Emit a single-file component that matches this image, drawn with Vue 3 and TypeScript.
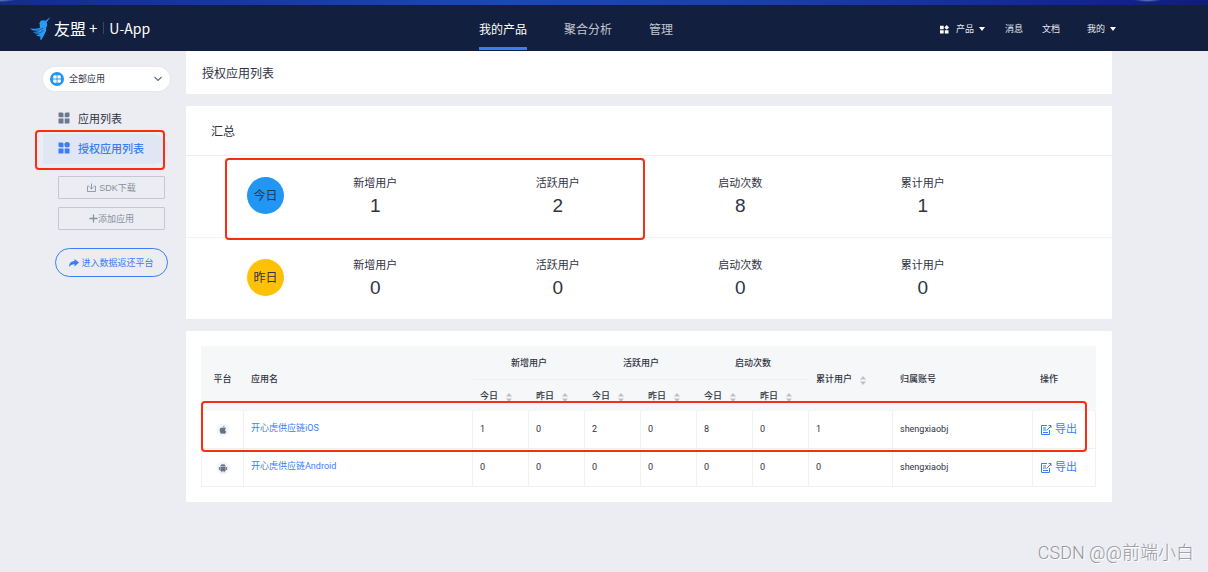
<script setup lang="ts">
import { ref } from 'vue'

interface Stat { label: string; value: number }
interface Summary { name: string; tone: string; stats: Stat[] }
interface AppRow { os: 'ios' | 'android'; name: string; values: number[]; total: number; account: string }

const tabs = ['我的产品', '聚合分析', '管理']
const scope = ref('全部应用')
const labels = ['新增用户', '活跃用户', '启动次数', '累计用户']
const groups = labels.slice(0, 3)

const toStats = (values: number[]): Stat[] => values.map((value, i) => ({ label: labels[i], value }))

const summaries: Summary[] = [
  { name: '今日', tone: 'blue', stats: toStats([1, 2, 8, 1]) },
  { name: '昨日', tone: 'amber', stats: toStats([0, 0, 0, 0]) },
]

const rows: AppRow[] = [
  { os: 'ios', name: '开心虎供应链iOS', values: [1, 0, 2, 0, 8, 0], total: 1, account: 'shengxiaobj' },
  { os: 'android', name: '开心虎供应链Android', values: [0, 0, 0, 0, 0, 0], total: 0, account: 'shengxiaobj' },
]
</script>

<template>
  <div class="page">
    <div class="strip"></div>
    <header class="topbar">
      <a class="brand" href="#">
        <svg class="bird" viewBox="0 0 66 76" aria-hidden="true">
          <path fill="#2b9af3" d="M65 1 52 19Q57 25 51 35Q53 45 45 58L35 75Q30 70 33 63Q24 64 18 58Q26 58 31 56Q18 57 9 49Q20 51 28 48Q10 48 0 37Q17 41 32 36Q29 32 31 27Q27 23 32 16Q40 9 49 14Z" />
          <path fill="none" stroke="#131f3e" stroke-width="1.6" d="M10 44Q27 46 42 37M17 53Q32 55 43 44" />
        </svg>
        <span class="brand-cn">友盟</span>
        <span class="plus">+</span>
        <span class="brand-app">U-App</span>
      </a>
      <nav class="tabs">
        <a v-for="(t, i) in tabs" :key="t" href="#" :class="{ on: i === 0 }">{{ t }}</a>
      </nav>
      <div class="tools">
        <button type="button" class="tool">
          <svg class="grid-icon" viewBox="0 0 9 9" aria-hidden="true">
            <path fill="#fff" d="M0 .8h3.700v3.400H0zM0 5.200h3.700v3.400H0zM4.800 5.200h3.700v3.400H4.800zM6.700 0 9 2.400 6.700 4.800 4.400 2.400z" />
          </svg>
          产品<i class="caret"></i>
        </button>
        <a href="#" class="tool news">消息</a>
        <a href="#" class="tool docs">文档</a>
        <button type="button" class="tool mine">我的<i class="caret"></i></button>
      </div>
    </header>

    <div class="body">
      <aside class="side">
        <label class="picker">
          <svg class="picker-icon" viewBox="0 0 14 14" aria-hidden="true">
            <circle cx="7" cy="7" r="7" fill="#2196f3" />
            <path fill="#fff" d="M4.200 3.200h2.400v3.400H3.200V4.200zM7.400 3.200h2.400l1 1v2.400H7.400zM3.200 7.400h3.400v3.400H4.200l-1-1zM7.400 7.400h3.400v2.400l-1 1H7.400z" />
          </svg>
          <select v-model="scope" aria-label="应用范围">
            <option>全部应用</option>
          </select>
          <svg class="chev" viewBox="0 0 8 6" aria-hidden="true">
            <path d="M.5 1 4 4.500 7.500 1" fill="none" stroke="#5f6b80" stroke-width="1.100" />
          </svg>
        </label>

        <nav class="menu">
          <a href="#" class="item">
            <svg viewBox="0 0 12 12" aria-hidden="true">
              <path fill="#6b788e" d="M1 .5h3.500l1 1V5.200h-4l-1-1V1zM7.700.5H11l.5.5v3.200l-1 1H6.700V1.500zM.5 6.500h5v5H1L.5 11zM6.700 6.500h4.800V11l-.5.5H6.700z" />
            </svg>
            应用列表
          </a>
          <a href="#" class="item active">
            <svg viewBox="0 0 12 12" aria-hidden="true">
              <path fill="#3a7df6" d="M.5.500h4l1 1v3.700h-4l-1-1zM.5 6.500h5v5h-5zM6.700 6.500h4.800v5H6.700z" />
              <circle cx="9.100" cy="2.800" r="2.700" fill="#3a7df6" />
            </svg>
            授权应用列表
          </a>
          <span class="mark mark-menu"></span>
        </nav>

        <div class="actions">
          <button type="button" class="box">
            <svg viewBox="0 0 10 10" aria-hidden="true">
              <path fill="none" stroke="#8790a0" d="M2.500 3.500h-2v6h9v-6h-2M5 .5v6M3 4.700l2 2 2-2" />
            </svg>
            SDK下载
          </button>
          <button type="button" class="box add">
            <svg viewBox="0 0 10 10" aria-hidden="true">
              <path fill="none" stroke="#8790a0" stroke-width="1.400" d="M5 .5v9M.5 5h9" />
            </svg>
            添加应用
          </button>
          <button type="button" class="pill">
            <svg viewBox="0 0 10 8" aria-hidden="true">
              <path fill="#3a7df6" d="M5.500 0 10 3.500 5.500 7.500V5.200Q2 4.800 0 8 0 2.200 5.500 2z" />
            </svg>
            进入数据返还平台
          </button>
        </div>
      </aside>

      <main class="content">
        <section class="card title"><h1>授权应用列表</h1></section>

        <section class="card">
          <h2>汇总</h2>
          <div v-for="(s, i) in summaries" :key="s.name" class="summary">
            <div class="day"><span class="disc" :class="s.tone">{{ s.name }}</span></div>
            <div v-for="st in s.stats" :key="st.label" class="stat">
              <span class="label">{{ st.label }}</span>
              <span class="num">{{ st.value }}</span>
            </div>
            <span v-if="i === 0" class="mark mark-day"></span>
          </div>
        </section>

        <section class="card list">
          <div class="table-wrap">
            <table>
              <colgroup>
                <col class="c-os" /><col />
                <col v-for="n in 6" :key="n" class="c-n" />
                <col class="c-total" /><col class="c-acc" /><col class="c-op" />
              </colgroup>
              <thead>
                <tr class="h1">
                  <th rowspan="2" class="mid">平台</th>
                  <th rowspan="2">应用名</th>
                  <th v-for="g in groups" :key="g" colspan="2" class="mid group">{{ g }}</th>
                  <th rowspan="2">
                    <button type="button" class="sort">累计用户
                      <svg viewBox="0 0 6 9" aria-hidden="true"><path fill="#bfbfc4" d="M3 0 6 3.500H0zM0 5.500h6L3 9z" /></svg>
                    </button>
                  </th>
                  <th rowspan="2">归属账号</th>
                  <th rowspan="2">操作</th>
                </tr>
                <tr class="h2">
                  <th v-for="n in 6" :key="n">
                    <button type="button" class="sort">{{ n % 2 ? '今日' : '昨日' }}
                      <svg viewBox="0 0 6 9" aria-hidden="true"><path fill="#bfbfc4" d="M3 0 6 3.500H0zM0 5.500h6L3 9z" /></svg>
                    </button>
                  </th>
                </tr>
              </thead>
              <tbody>
                <tr v-for="r in rows" :key="r.os">
                  <td class="mid">
                    <svg v-if="r.os === 'ios'" class="os" viewBox="0 0 14 14" role="img" aria-label="iOS">
                      <circle cx="7" cy="7" r="6.500" fill="#f3f5f8" />
                      <path fill="#667389" d="M7 4.900C8 4.200 9.400 4.400 10 5.300 8.700 6.200 8.900 8 10.300 8.600 9.700 10.300 8.700 11.200 7.900 10.800Q7 10.400 6.200 10.800C4.900 11.300 3.500 8.800 3.700 6.900 3.900 4.800 5.600 4.200 7 4.900zM7 4.300Q7 2.900 8.500 2.500 8.600 4 7 4.300z" />
                    </svg>
                    <svg v-else class="os" viewBox="0 0 14 14" role="img" aria-label="Android">
                      <circle cx="7" cy="7" r="6.500" fill="#f3f5f8" />
                      <path fill="#667389" d="M4.400 5.600C4.500 4.500 5 4 5.500 3.600L5 2.700 5.800 3.400Q7 3 8.200 3.400L9 2.700 8.500 3.600C9 4 9.500 4.500 9.600 5.600zM4.400 6.100h5.200V10H8.700v1.200H7.600V10H6.400v1.200H5.300V10h-.9zM2.900 6.100h1V9h-1zM10.100 6.100h1V9h-1z" />
                    </svg>
                  </td>
                  <td class="name"><a href="#" class="link">{{ r.name }}</a></td>
                  <td v-for="(v, i) in r.values" :key="i">{{ v }}</td>
                  <td>{{ r.total }}</td>
                  <td>{{ r.account }}</td>
                  <td>
                    <button type="button" class="export">
                      <svg viewBox="0 0 12 12" aria-hidden="true">
                        <path fill="none" stroke="#3a7df6" d="M7 1.500H1.500v9h8V6M3 4h3M3 6h3M3 8.500h5M6.500 6.500l4.500-4.500M8.500 1.500H11V4" />
                      </svg>
                      导出
                    </button>
                  </td>
                </tr>
              </tbody>
            </table>
            <span class="mark mark-row"></span>
          </div>
        </section>
      </main>
    </div>
    <span class="watermark">CSDN @@前端小白</span>
  </div>
</template>

<style>
body { margin: 0; background: #ecedf3; }
</style>

<style scoped>
* { box-sizing: border-box; }
.page {
  position: relative;
  min-height: 100vh;
  background: #ecedf3;
  color: #2f3342;
  font: 12px/16px "Noto Sans CJK SC", sans-serif;
}
a { text-decoration: none; color: inherit; }
button {
  font: inherit;
  color: inherit;
  border: 0;
  padding: 0;
  background: none;
  cursor: pointer;
}
svg { display: block; flex: none; }
h1, h2 { margin: 0; font-size: 12px; font-weight: 400; }

.strip {
  height: 5px;
  background:
    radial-gradient(ellipse 16px 2px at 0 0, #6d80bd, transparent),
    radial-gradient(ellipse 14px 2px at 95% 0, #6d80bd, transparent),
    linear-gradient(90deg, #132c88, #1a4aac 42%, #19409f 65%, #101c7c);
}
.topbar {
  display: grid;
  grid-template-columns: 449px auto 1fr;
  height: 46px;
  padding: 0 92px 0 30px;
  background: #131f3e;
  color: #fff;
}
.brand { display: flex; align-items: center; }
.bird { width: 21px; height: 25px; }
.brand-cn { margin-left: 3px; font-size: 16px; }
.plus { margin-left: 3px; font-size: 15px; }
.brand-app {
  margin-left: 6px;
  padding-left: 5px;
  border-left: 1px solid #3a4560;
  font-size: 14px;
  line-height: 12px;
}
.tabs { display: flex; gap: 37px; }
.tabs a {
  padding-top: 16px;
  height: 45px;
  border-bottom: 3px solid transparent;
  color: #c3c7d0;
}
.tabs .on { color: #fff; border-color: #3a7df6; }
.tools { display: flex; justify-content: flex-end; align-items: center; padding-top: 2px; font-size: 9px; }
.tool { display: flex; align-items: center; color: #e6e8ee; line-height: 14px; }
.grid-icon { width: 9px; height: 9px; margin-right: 7px; }
.caret {
  margin-left: 5px;
  border: 3px solid transparent;
  border-top: 4px solid #fff;
  border-bottom: 0;
}
.news { margin-left: 20px; }
.docs { margin-left: 19px; }
.mine { margin-left: 27px; }

.body { display: grid; grid-template-columns: 186px minmax(0, 1fr); padding-right: 96px; }
.side { padding: 16px 16px 0 43px; }
.picker {
  display: flex;
  align-items: center;
  height: 24px;
  padding: 0 8px 0 7px;
  border-radius: 12px;
  background: #fff;
  box-shadow: 0 0 2px #d9dce6;
}
.picker-icon { width: 14px; height: 14px; }
.picker select {
  flex: 1;
  min-width: 0;
  margin-left: 5px;
  padding: 0;
  border: 0;
  background: none;
  appearance: none;
  color: #2f3342;
  font: 9px/16px "Noto Sans CJK SC", sans-serif;
}
.chev { width: 8px; height: 6px; }
.menu { position: relative; margin: 13px 2px 0 0; }
.item {
  display: flex;
  align-items: center;
  gap: 8px;
  height: 30px;
  padding: 0 0 2px 15px;
  font-size: 11px;
}
.item svg { width: 12px; height: 12px; }
.active {
  border-radius: 0 15px 15px 0;
  background: #e1e6f4;
  color: #3a7df6;
  font-weight: 500;
}
.actions { display: flex; flex-direction: column; gap: 8px; margin: 12px 2px 0 12px; }
.actions button { display: flex; align-items: center; justify-content: center; font-size: 9px; }
.box {
  height: 23px;
  margin: 0 3px;
  border: 1px solid #c4c8d2;
  border-radius: 1px;
  color: #8790a0;
  gap: 3px;
}
.actions .box { font-family: "Liberation Sans", "Noto Sans CJK SC", sans-serif; }
.box svg { width: 9px; height: 9px; }
.actions .add { gap: 0; }
.pill {
  height: 29px;
  margin-top: 10px;
  border: 1px solid #3a7df6;
  border-radius: 15px;
  color: #3a7df6;
  gap: 2px;
}
.pill svg { width: 10px; height: 8px; }

.content { display: flex; flex-direction: column; gap: 12px; }
.card { background: #fff; border-radius: 1px; }
.title { padding: 14px 16px 13px; }
.card h2 { padding: 17px 25px 16px; border-bottom: 1px solid #ededf0; }
.summary {
  position: relative;
  display: grid;
  grid-template-columns: 98px repeat(4, 1fr) 98px;
  padding: 18px 0 19px;
  border-bottom: 1px solid #f3f3f5;
}
.summary:last-child { border-bottom: 0; }
.day { display: flex; justify-content: flex-end; padding-top: 3px; }
.disc {
  width: 37px;
  height: 37px;
  border-radius: 50%;
  line-height: 36px;
  text-align: center;
}
.blue { background: #2196f3; }
.amber { background: #ffc107; }
.stat { display: flex; flex-direction: column; align-items: center; gap: 4px; }
.label { font-size: 11px; }
.num { font: 19px/24px "Liberation Sans", sans-serif; }

.list { padding: 15px 16px 15px 15px; }
.table-wrap { position: relative; }
table {
  width: 100%;
  table-layout: fixed;
  border-collapse: separate;
  border-spacing: 0;
  font: 9px/14px Roboto, "Noto Sans CJK SC", sans-serif;
}
.c-os { width: 43px; }
.c-n { width: 56px; }
.c-total { width: 84px; }
.c-acc { width: 140px; }
.c-op { width: 63px; }
th {
  padding: 0 0 0 7px;
  background: #f6f7f9;
  text-align: left;
  font-weight: 500;
}
.h1 { height: 34px; }
.h2 { height: 31px; }
.group { border-bottom: 1px solid #eff0f3; }
th.mid, td.mid { padding: 0; text-align: center; }
.sort { display: flex; align-items: center; gap: 8px; }
.sort svg { width: 6px; height: 9px; margin-top: 3px; }
td {
  height: 38px;
  padding: 0 0 1px 7px;
  border-right: 1px solid #f0f1f4;
  border-bottom: 1px solid #f0f1f4;
}
td:first-child { border-left: 1px solid #f0f1f4; }
td.name { padding-bottom: 3px; }
td:last-child { padding: 1px 0 0 7px; }
.os { width: 14px; height: 14px; margin: 0 auto; }
.link { color: #3a7df6; }
.export { display: flex; align-items: center; gap: 3px; color: #3a7df6; font-size: 11px; }
.export svg { width: 12px; height: 12px; }

/* highlight frames laid over the content */
.mark {
  position: absolute;
  border: 2px solid #fb2c10;
  border-radius: 4px;
  pointer-events: none;
}
.mark-menu { left: -8px; right: 3px; bottom: -6px; height: 40px; }
.mark-day { left: 39px; top: 2px; width: 420px; height: 82px; z-index: 1; }
.mark-row { left: 0; right: 9px; top: 55px; height: 51px; }

.watermark {
  position: absolute;
  right: 14px;
  bottom: 8px;
  color: #96979c;
  font: 300 18px/22px Roboto, "Noto Sans CJK SC", sans-serif;
  text-shadow: 1px 1px 0 #fff;
}
</style>
